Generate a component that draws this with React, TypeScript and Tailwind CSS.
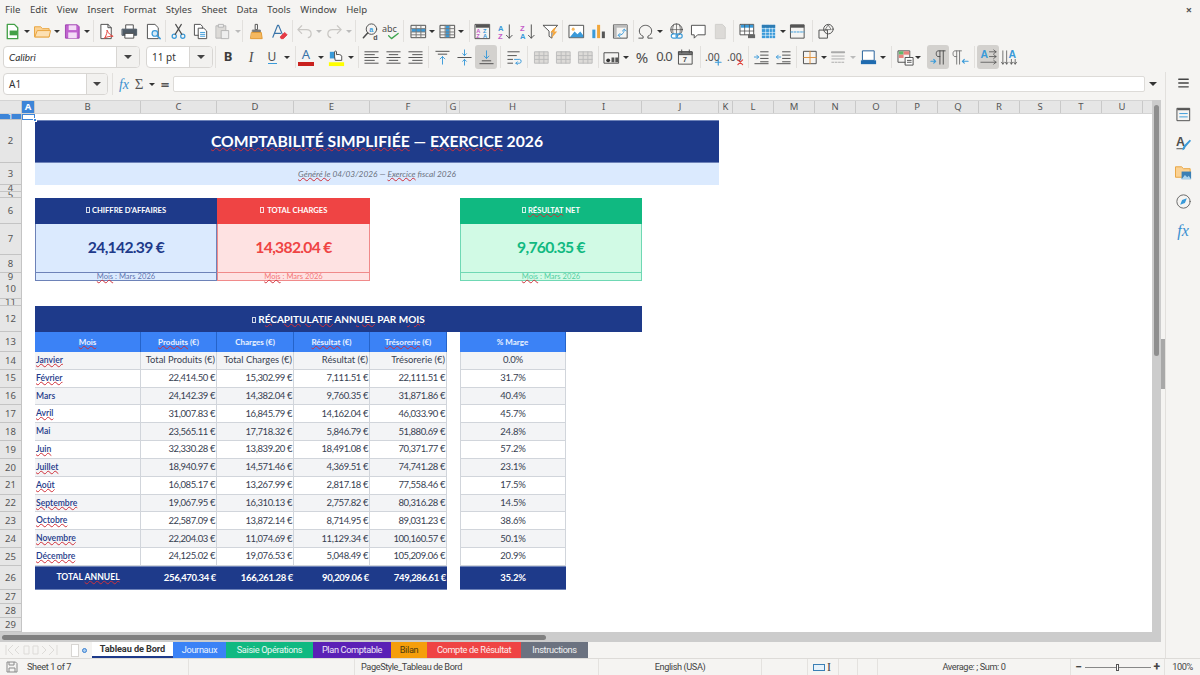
import React from 'react';

const DK = '#4d4d4d';
const BL = '#3a9ad9';
const GY = '#b5b5b5';

const COLS = 'grid grid-cols-[22px_13px_106px_76px_77px_76px_77px_13px_106px_76px_77px_14px_repeat(10,41px)_8px]';
const BODY = "font-['Lato',sans-serif]";
const UI = "font-['Noto_Sans',sans-serif]";
const UI2 = "font-['Roboto',sans-serif]";

const Svg = ({ children }: { children: React.ReactNode }) => (
  <svg viewBox="0 0 20 20" className="w-[19px] h-[19px] shrink-0" fill="none" strokeWidth="1" strokeLinecap="round" strokeLinejoin="round">
    {children}
  </svg>
);

const Btn = ({ w, on, children }: { w: string; on?: boolean; children?: React.ReactNode }) => (
  <div className={`${w} h-[24px] shrink-0 flex items-center justify-center ${on ? 'bg-[#d3d1ce] rounded-[3px]' : ''}`}>{children}</div>
);

const Arrow = ({ w, off }: { w: string; off?: boolean }) => (
  <div className={`${w} h-[24px] shrink-0 flex items-center justify-center`}>
    <div className={`w-0 h-0 border-x-[3px] border-x-transparent border-t-[3px] ${off ? 'border-t-[#bbbbbb]' : 'border-t-[#333333]'}`}></div>
  </div>
);

const Sep = ({ w }: { w: string }) => (
  <div className={`${w} h-[22px] shrink-0 flex justify-center`}>
    <div className="w-px h-full bg-[#e2e0dd]"></div>
  </div>
);

const Lines = ({ pts, c = DK }: { pts: number[][]; c?: string }) => (
  <>
    {pts.map((p, i) => (
      <path key={i} d={`M${p[0]} ${p[1]}H${p[2]}`} stroke={c} />
    ))}
  </>
);

const GridIco = ({ row, col }: { row?: boolean; col?: boolean }) => (
  <Svg>
    <rect x="2.5" y="3.5" width="15" height="13" stroke={DK} />
    {row && <rect x="3" y="7" width="14" height="3.5" fill={BL} />}
    {col && <rect x="8" y="4" width="4" height="12" fill={BL} />}
    <path d="M2.5 7H17.5M2.5 10.5H17.5M2.5 13.5H17.5M7.5 3.5V16.5M12.5 3.5V16.5" stroke="#777" />
  </Svg>
);

const MergeIco = () => (
  <Svg>
    <rect x="3" y="4" width="14" height="12" fill="#dddbd8" stroke="#bbb" />
    <path d="M3 8H17M3 12H17M7.5 4V16M12.5 4V16" stroke="#bbb" />
  </Svg>
);

const AlignIco = ({ pts }: { pts: number[][] }) => (
  <Svg>
    <Lines pts={pts} />
  </Svg>
);

const Letter = ({ x, y, c, s = 7, t }: { x: number; y: number; c: string; s?: number; t: string }) => (
  <text x={x} y={y} fontSize={s} fill={c} fontFamily="Liberation Sans" fontWeight="700">
    {t}
  </text>
);

const Toolbar1 = () => (
  <div className="h-[22px] flex pl-px items-center">
    <Btn w="w-[22px]">
      <Svg>
        <path d="M4.5 2.5H12L15.5 6V17.5H4.5Z" fill="#fff" stroke="#43a047" strokeWidth="1.4" />
        <rect x="7" y="9" width="8" height="5" fill="#43a047" />
      </Svg>
    </Btn>
    <Arrow w="w-[8px]" />
    <Btn w="w-[22px]">
      <Svg>
        <path d="M2 5H8L10 7H17V15.5H2Z" fill="#fbd294" stroke="#e8a33d" />
        <path d="M2 15.5L4.5 9H18.5L17 15.5Z" fill="#fce0b3" stroke="#e8a33d" />
      </Svg>
    </Btn>
    <Arrow w="w-[8px]" />
    <Btn w="w-[22px]">
      <Svg>
        <path d="M3 3H15L17 5V17H3Z" fill="#c062cf" stroke="#9c3fae" />
        <rect x="6" y="3.5" width="8" height="5" fill="#f4dcf7" />
        <rect x="5.5" y="11" width="9" height="6" fill="#f4dcf7" />
      </Svg>
    </Btn>
    <Arrow w="w-[7px]" />
    <Sep w="w-[6px]" />
    <Btn w="w-[21px]">
      <Svg>
        <path d="M4.5 2.5H11.5L15 6V17.5H4.5Z" stroke={DK} fill="#fff" />
        <path d="M11.5 2.5V6H15" stroke={DK} />
        <path d="M8 17C10 14 11 10 10.5 8.5C12 12 14 14 17 15C13 15 10 15.5 8 17Z" stroke="#e0403a" />
      </Svg>
    </Btn>
    <Btn w="w-[24px]">
      <Svg>
        <path d="M6 7V3H14V7" stroke={DK} fill="#fff" />
        <path d="M2.5 7.5H17.5V14H2.5Z" fill="#4f5b66" stroke="#4f5b66" />
        <rect x="5.5" y="12" width="9" height="5" fill="#fff" stroke={DK} />
      </Svg>
    </Btn>
    <Btn w="w-[24px]">
      <Svg>
        <path d="M4 2.5H11.5L15 6V17.5H4Z" stroke={DK} fill="#fff" />
        <circle cx="11.5" cy="12" r="3" stroke={BL} fill="#d7ebf8" strokeWidth="1.3" />
        <path d="M14 14.5L17 17.5" stroke={BL} strokeWidth="1.6" />
      </Svg>
    </Btn>
    <Sep w="w-px" />
    <Btn w="w-[24px]">
      <Svg>
        <circle cx="5.5" cy="15" r="2.2" stroke={BL} strokeWidth="1.3" />
        <circle cx="14.5" cy="15" r="2.2" stroke={BL} strokeWidth="1.3" />
        <path d="M6.5 13L13 2.5M13.5 13L7 2.5" stroke={DK} strokeWidth="1.2" />
      </Svg>
    </Btn>
    <Btn w="w-[20px]">
      <Svg>
        <path d="M4 2.5H10L12 4.5V14H4Z" stroke={DK} fill="#fff" />
        <path d="M8 6.5H13.5L16.5 9.5V17.5H8Z" stroke={DK} fill="#fff" />
        <path d="M10 11H14.5M10 13H14.5M10 15H14.5" stroke={BL} />
      </Svg>
    </Btn>
    <Btn w="w-[24px]">
      <Svg>
        <rect x="3.5" y="4" width="10" height="13" fill="#dcdad7" stroke={GY} />
        <rect x="6" y="2.5" width="5" height="3" fill="#eee" stroke={GY} />
        <rect x="9" y="9" width="7.5" height="8.5" fill="#eee" stroke={GY} />
      </Svg>
    </Btn>
    <Arrow w="w-[8px]" off />
    <Sep w="w-px" />
    <Btn w="w-[26px]">
      <Svg>
        <path d="M9 2.5H11V8H9Z" stroke={DK} fill="#fff" />
        <path d="M6 8.5H14V11H6Z" fill="#777" stroke="#777" />
        <path d="M5 11H15L16 17.5H4Z" fill="#f5b85f" stroke="#e09a33" />
      </Svg>
    </Btn>
    <Btn w="w-[20px]">
      <Svg>
        <path d="M3 16L8 3.5H9L13 13M5 12H11" stroke="#3973a8" strokeWidth="1.2" />
        <path d="M11 15.5L15.5 11L18 13.5L14 17.5H12Z" fill="#e53b46" stroke="#e53b46" />
      </Svg>
    </Btn>
    <Sep w="w-[6px]" />
    <Btn w="w-[18px]">
      <Svg>
        <path d="M3 8L7 4M3 8L7 12M3 8H12C15 8 17 10 17 12.5C17 14.5 15.5 16 14 16.5" stroke="#c9c7c4" strokeWidth="1.3" />
      </Svg>
    </Btn>
    <Arrow w="w-[12px]" off />
    <Btn w="w-[18px]">
      <Svg>
        <path d="M17 8L13 4M17 8L13 12M17 8H8C5 8 3 10 3 12.5C3 14.5 4.5 16 6 16.5" stroke="#c9c7c4" strokeWidth="1.3" />
      </Svg>
    </Btn>
    <Arrow w="w-[12px]" off />
    <Sep w="w-px" />
    <Btn w="w-[28px]">
      <Svg>
        <circle cx="11" cy="7.5" r="5.5" stroke={DK} />
        <path d="M7 11.5L2.5 16.5" stroke={DK} strokeWidth="1.6" />
        <Letter x={8.6} y={10} c={BL} s={7.5} t="a" />
        <Letter x={13} y={18.5} c={DK} s={7.5} t="d" />
      </Svg>
    </Btn>
    <Btn w="w-[14px]">
      <Svg>
        <text x="0" y="10" fontSize="9.5" fill={DK} fontFamily="Noto Sans">abc</text>
        <path d="M7 14.5L10 17.5L17 12" stroke="#3fa650" strokeWidth="1.4" />
      </Svg>
    </Btn>
    <Sep w="w-[10px]" />
    <Btn w="w-[20px]">
      <GridIco row />
    </Btn>
    <Arrow w="w-[8px]" />
    <Btn w="w-[22px]">
      <GridIco col />
    </Btn>
    <Arrow w="w-[6px]" />
    <Sep w="w-[10px]" />
    <Btn w="w-[16px]">
      <Svg>
        <rect x="2.5" y="2.5" width="15" height="15" stroke={DK} />
        <rect x="3" y="3" width="14" height="3" fill="#555" />
        <Letter x={3.5} y={12} c="#c45cc9" s={6} t="A" />
        <Letter x={3.5} y={17} c="#c45cc9" s={6} t="Z" />
        <Letter x={10.5} y={12} c={BL} s={6} t="Z" />
        <Letter x={10.5} y={17} c={BL} s={6} t="A" />
      </Svg>
    </Btn>
    <div className="w-[4px] shrink-0"></div>
    <Btn w="w-[22px]">
      <Svg>
        <Letter x={2} y={9} c={BL} s={8} t="A" />
        <Letter x={2} y={18} c="#c45cc9" s={8} t="Z" />
        <path d="M14 3V17M11 14L14 17L17 14" stroke={DK} />
      </Svg>
    </Btn>
    <Btn w="w-[22px]">
      <Svg>
        <Letter x={2} y={9} c="#c45cc9" s={8} t="Z" />
        <Letter x={2} y={18} c={BL} s={8} t="A" />
        <path d="M14 3V17M11 14L14 17L17 14" stroke={DK} />
      </Svg>
    </Btn>
    <Btn w="w-[24px]">
      <Svg>
        <path d="M2.5 3.5H17.5L11.5 10V17L8.5 15V10Z" stroke={DK} fill="#fff" />
        <path d="M13 7L16 5L14 10H17L11 17L13 11H10Z" fill="#f5a63c" />
      </Svg>
    </Btn>
    <Sep w="w-px" />
    <Btn w="w-[26px]">
      <Svg>
        <rect x="2.5" y="3.5" width="15" height="13" stroke={DK} fill="#fff" />
        <circle cx="6.5" cy="7.5" r="1.6" fill="#f5b85f" />
        <path d="M3 16L8 10L11 13L14 10L17 14V16Z" fill={BL} />
      </Svg>
    </Btn>
    <Btn w="w-[18px]">
      <Svg>
        <rect x="3.5" y="8" width="3.2" height="9" fill={BL} />
        <rect x="8.5" y="3" width="3.2" height="14" fill="#f0a63c" />
        <rect x="13.5" y="10" width="3.2" height="7" fill="#555" />
      </Svg>
    </Btn>
    <Btn w="w-[26px]">
      <Svg>
        <rect x="3" y="3" width="14" height="14" stroke={DK} />
        <rect x="3" y="3" width="14" height="3" fill="#bbb" />
        <rect x="3" y="3" width="3" height="14" fill="#bbb" />
        <path d="M8 14C12 14 14 11 14 8M12 9.5L14 7.5L16 9.5M9.5 12L7.5 14L9.5 16" stroke={BL} />
      </Svg>
    </Btn>
    <Sep w="w-px" />
    <Btn w="w-[22px]">
      <Svg>
        <path d="M3 17H7.5V15C5 14 3.5 12 3.5 9.5C3.5 6 6.5 3.5 10 3.5C13.5 3.5 16.5 6 16.5 9.5C16.5 12 15 14 12.5 15V17H17" stroke={DK} />
      </Svg>
    </Btn>
    <Arrow w="w-[8px]" />
    <Btn w="w-[24px]">
      <Svg>
        <circle cx="10" cy="8" r="6" stroke={DK} />
        <path d="M4 8H16M10 2V14M7 3C5.5 6 5.5 10 7 13M13 3C14.5 6 14.5 10 13 13" stroke={DK} strokeWidth="0.7" />
        <rect x="4.5" y="12.5" width="6.5" height="4.5" rx="2.2" fill="#fff" stroke={BL} strokeWidth="1.2" />
        <rect x="9.5" y="12.5" width="6.5" height="4.5" rx="2.2" fill="none" stroke={BL} strokeWidth="1.2" />
      </Svg>
    </Btn>
    <Btn w="w-[20px]">
      <Svg>
        <path d="M3 3.5H17V13.5H9L5.5 17V13.5H3Z" stroke={DK} fill="#fff" />
      </Svg>
    </Btn>
    <Btn w="w-[24px]">
      <Svg>
        <path d="M5 2.5H12L15 5.5V17.5H5Z" fill="#dcdad7" stroke="#cfcdca" />
      </Svg>
    </Btn>
    <Sep w="w-[2px]" />
    <Btn w="w-[26px]">
      <Svg>
        <rect x="2.5" y="2.5" width="14" height="11" stroke={DK} fill="#fff" />
        <rect x="3" y="3" width="13" height="3" fill={BL} />
        <path d="M2.5 9.5H16.5M7 3V13M12 3V13" stroke={DK} strokeWidth="0.8" />
        <path d="M10.5 13H18V17H10.5Z" fill="#666" />
      </Svg>
    </Btn>
    <Btn w="w-[16px]">
      <Svg>
        <rect x="3" y="3" width="14" height="14" fill={BL} />
        <path d="M3 7H17M3 11H17M3 14H17M7 3V17M11 3V17M14 3V17" stroke="#fff" strokeWidth="0.6" />
        <rect x="3" y="3" width="14" height="3" fill="#2e7cb3" />
      </Svg>
    </Btn>
    <Arrow w="w-[14px]" />
    <Btn w="w-[14px]">
      <Svg>
        <rect x="3" y="3" width="14" height="14" stroke={DK} />
        <rect x="3" y="3" width="14" height="3" fill="#555" />
        <path d="M3 10.5H17" stroke={BL} strokeDasharray="2 1.4" />
      </Svg>
    </Btn>
    <Sep w="w-[16px]" />
    <Btn w="w-[12px]">
      <Svg>
        <rect x="2.5" y="8.5" width="8.5" height="8.5" stroke={DK} />
        <circle cx="12" cy="7.5" r="5" stroke={DK} />
        <path d="M12 3.5L15 8H9Z" stroke={DK} strokeWidth="0.7" />
      </Svg>
    </Btn>
  </div>
);

const Combo = ({ w, boxW, text, italic }: { w: string; boxW: string; text: string; italic?: boolean }) => (
  <div className={`${w} h-[22px] shrink-0 flex border border-[#d8d6d3] rounded-[4px] bg-white overflow-hidden`}>
    <div className={`flex-1 flex items-center pl-[5px] text-[10px] text-[#333333] ${italic ? `${BODY} italic` : UI}`}>{text}</div>
    <div className={`${boxW} bg-[#f2f1ef] border-l border-[#d8d6d3] flex items-center justify-center`}>
      <div className="w-0 h-0 border-x-[4px] border-x-transparent border-t-[4px] border-t-[#444444]"></div>
    </div>
  </div>
);

const ALeft = [[3, 4, 17], [3, 7, 13], [3, 10, 17], [3, 13, 13], [3, 16, 17]];
const ACenter = [[3, 4, 17], [5.5, 7, 14.5], [3, 10, 17], [5.5, 13, 14.5], [3, 16, 17]];
const ARight = [[3, 4, 17], [7, 7, 17], [3, 10, 17], [7, 13, 17], [3, 16, 17]];

const Toolbar2 = () => (
  <div className="h-[30px] flex pl-[3px] items-center">
    <Combo w="w-[137px]" boxW="w-[23px]" text="Calibri" italic />
    <div className="w-[6px] shrink-0"></div>
    <Combo w="w-[67px]" boxW="w-[23px]" text="11 pt" />
    <Sep w="w-[4px]" />
    <Btn w="w-[22px]"><span className={`${UI} font-bold text-[13px] text-[#3c3c3c]`}>B</span></Btn>
    <Btn w="w-[24px]"><span className="font-['Liberation_Serif',serif] italic text-[14px] text-[#4d4d4d]">I</span></Btn>
    <Btn w="w-[18px]">
      <div className="flex flex-col items-center">
        <span className={`${UI} text-[12px] leading-[13px] text-[#4d4d4d]`}>U</span>
        <div className="w-[9px] h-px bg-[#3a9ad9]"></div>
      </div>
    </Btn>
    <Arrow w="w-[12px]" />
    <Sep w="w-[4px]" />
    <Btn w="w-[18px]">
      <div className="flex flex-col items-center">
        <span className={`${UI} text-[13px] leading-[13px] text-[#3973a8]`}>A</span>
        <div className="w-[16px] h-[4px] mt-px bg-[#c9211e]"></div>
      </div>
    </Btn>
    <Arrow w="w-[12px]" />
    <Btn w="w-[18px]">
      <Svg>
        <rect x="3" y="4" width="7" height="7" fill={BL} />
        <path d="M8 9V4C8 3 10 3 10 4V7C12 6.5 15 7 15.5 8.5V13H9Z" fill="#fff" stroke={DK} />
        <rect x="2" y="15" width="16" height="4" fill="#ffff00" />
      </Svg>
    </Btn>
    <Arrow w="w-[12px]" />
    <Sep w="w-[2px]" />
    <Btn w="w-[24px]"><AlignIco pts={ALeft} /></Btn>
    <Btn w="w-[21px]"><AlignIco pts={ACenter} /></Btn>
    <Btn w="w-[22px]"><AlignIco pts={ARight} /></Btn>
    <Sep w="w-[5px]" />
    <Btn w="w-[22px]">
      <Svg>
        <path d="M3 3.5H17M5.5 6.5H14.5" stroke={DK} />
        <path d="M10 17V9M7.5 11.5L10 9L12.5 11.5" stroke={BL} />
      </Svg>
    </Btn>
    <Btn w="w-[22px]">
      <Svg>
        <path d="M3 10H17" stroke={DK} />
        <path d="M10 2V8M8 6L10 8L12 6M10 18V12M8 14L10 12L12 14" stroke={BL} />
      </Svg>
    </Btn>
    <Btn w="w-[22px]" on>
      <Svg>
        <path d="M5.5 13.5H14.5M3 16.5H17" stroke={DK} />
        <path d="M10 3V11M7.5 8.5L10 11L12.5 8.5" stroke={BL} />
      </Svg>
    </Btn>
    <Sep w="w-[6px]" />
    <Btn w="w-[22px]">
      <Svg>
        <path d="M3 4H15M3 8H12M3 12H8M3 16H8" stroke={DK} />
        <path d="M10 12H15.5C17.5 12 17.5 16 15.5 16H11.5M13 14.5L11.5 16L13 17.5" stroke={BL} />
      </Svg>
    </Btn>
    <Sep w="w-[5px]" />
    <Btn w="w-[22px]"><MergeIco /></Btn>
    <Btn w="w-[22px]"><MergeIco /></Btn>
    <Btn w="w-[22px]"><MergeIco /></Btn>
    <Sep w="w-[4px]" />
    <Btn w="w-[22px]">
      <Svg>
        <rect x="2.5" y="5" width="15" height="11" stroke={DK} />
        <circle cx="6.5" cy="13" r="2" fill="#333" />
        <rect x="10" y="10" width="3" height="5" fill="#555" />
        <rect x="14" y="10" width="3" height="5" fill="#555" />
      </Svg>
    </Btn>
    <Arrow w="w-[8px]" />
    <Btn w="w-[24px]"><span className={`${UI} text-[15px] text-[#4d4d4d]`}>%</span></Btn>
    <Btn w="w-[20px]"><span className={`${UI} text-[13px] tracking-[-1px] text-[#4d4d4d]`}>0.0</span></Btn>
    <Btn w="w-[22px]">
      <Svg>
        <rect x="3" y="4" width="14" height="13" stroke={DK} />
        <path d="M3 4H17V7H3ZM6 2V5M14 2V5" stroke={DK} fill="#777" />
        <Letter x={7} y={15} c={DK} s={8} t="7" />
      </Svg>
    </Btn>
    <Sep w="w-[8px]" />
    <Btn w="w-[18px]">
      <Svg>
        <text x="1" y="14" fontSize="11" fill={DK} fontFamily="Noto Sans">.00</text>
        <path d="M15 12V18M12 15H18" stroke={BL} strokeWidth="1.2" />
      </Svg>
    </Btn>
    <Btn w="w-[26px]">
      <Svg>
        <text x="1" y="14" fontSize="11" fill={DK} fontFamily="Noto Sans">.00</text>
        <path d="M12.5 12.5L17.5 17.5M17.5 12.5L12.5 17.5" stroke="#e0403a" strokeWidth="1.2" />
      </Svg>
    </Btn>
    <Sep w="w-px" />
    <Btn w="w-[24px]">
      <Svg>
        <path d="M9 4H17M9 7.5H17M9 11H17M9 14.5H17M3 16.5H17" stroke={DK} />
        <path d="M2.5 9.5H7M5 7.5L7 9.5L5 11.5" stroke={BL} />
      </Svg>
    </Btn>
    <Btn w="w-[20px]">
      <Svg>
        <path d="M9 4H17M9 7.5H17M9 11H17M9 14.5H17M3 16.5H17" stroke={DK} />
        <path d="M7 9.5H2.5M4.5 7.5L2.5 9.5L4.5 11.5" stroke={BL} />
      </Svg>
    </Btn>
    <Sep w="w-[6px]" />
    <Btn w="w-[22px]">
      <Svg>
        <rect x="3" y="3.5" width="13" height="13" stroke={DK} />
        <path d="M9.5 3.5V16.5M3 10H16" stroke="#e0903a" />
      </Svg>
    </Btn>
    <Arrow w="w-[6px]" />
    <Btn w="w-[22px]">
      <Svg>
        <path d="M3 4.5H16" stroke="#aaa" strokeWidth="2" />
        <path d="M3 8.5H16M3 11.5H16" stroke="#aaa" />
        <path d="M3 15H16" stroke="#aaa" strokeDasharray="2 1.5" />
      </Svg>
    </Btn>
    <Arrow w="w-[8px]" off />
    <Btn w="w-[22px]">
      <Svg>
        <rect x="4" y="3" width="12" height="10" stroke="#1f5d99" fill="#fff" />
        <rect x="2" y="13" width="16" height="4" fill="#1f6bb0" />
      </Svg>
    </Btn>
    <Arrow w="w-[8px]" />
    <Sep w="w-[8px]" />
    <Btn w="w-[20px]">
      <Svg>
        <rect x="2.5" y="3" width="12" height="12" stroke={DK} />
        <rect x="3" y="3.5" width="5" height="3.5" fill="#5fb96b" />
        <rect x="8" y="3.5" width="6" height="3.5" fill="#e8837f" />
        <rect x="3" y="7" width="5" height="3.5" fill="#e8837f" />
        <rect x="10" y="10" width="8" height="8" fill="#fff" stroke={DK} />
        <path d="M12 13H16M12 15H16" stroke={DK} />
      </Svg>
    </Btn>
    <Arrow w="w-[6px]" />
    <div className="w-[6px] shrink-0"></div>
    <Btn w="w-[22px]" on>
      <Svg>
        <path d="M15 3V17M11.5 3V17M17 3H9.5C7 3 7 9 9.5 9H11.5" stroke={DK} />
        <path d="M2 14H7M5 12L7 14L5 16" stroke={BL} strokeWidth="1.2" />
      </Svg>
    </Btn>
    <Btn w="w-[22px]">
      <Svg>
        <path d="M9 3V17M6 3V17M11 3H4C1.5 3 1.5 9 4 9H6" stroke="#777" />
        <path d="M18 14H12M14 12L12 14L14 16" stroke={BL} strokeWidth="1.2" />
      </Svg>
    </Btn>
    <Sep w="w-[6px]" />
    <Btn w="w-[22px]" on>
      <Svg>
        <Letter x={1.5} y={11} c={BL} s={11} t="A" />
        <path d="M11 4H18M15.5 2L18 4L15.5 6M11 9H18M15.5 7L18 9L15.5 11M2 15H18M15.5 13L18 15L15.5 17" stroke={DK} strokeWidth="0.8" />
      </Svg>
    </Btn>
    <Btn w="w-[20px]">
      <Svg>
        <Letter x={9} y={11} c={BL} s={11} t="A" />
        <path d="M3 3V17M1.5 15L3 17L4.5 15M7 3V17M5.5 15L7 17L8.5 15M12 12V17M10.5 15L12 17L13.5 15M16 12V17M14.5 15L16 17L17.5 15" stroke={DK} strokeWidth="0.8" />
      </Svg>
    </Btn>
  </div>
);

const FormulaBar = () => (
  <div className="h-[28px] flex items-start pl-[3px] pt-[1px]">
    <Combo w="w-[105px]" boxW="w-[21px]" text="A1" />
    <div className="w-[4px] shrink-0"></div>
    <Sep w="w-px" />
    <div className="w-[3px] shrink-0"></div>
    <div className="w-[16px] h-[22px] flex items-center justify-center font-['Liberation_Serif',serif] italic text-[14px] text-[#3a8fd0]">fx</div>
    <div className="w-[14px] h-[22px] flex items-center justify-center font-['Liberation_Serif',serif] text-[15px] text-[#555555]">Σ</div>
    <div className="w-[12px] h-[22px] flex items-center justify-center">
      <div className="w-0 h-0 border-x-[3px] border-x-transparent border-t-[3px] border-t-[#333333]"></div>
    </div>
    <div className="w-[14px] h-[22px] flex items-center justify-center text-[15px] font-bold text-[#555555]">=</div>
    <div className="w-px"></div>
    <div className="w-[972px] h-[16px] mt-[3px] bg-white border border-[#dddbd8] rounded-[2px]"></div>
    <div className="flex-1 h-[22px] flex items-center justify-center">
      <div className="w-0 h-0 border-x-[4px] border-x-transparent border-t-[4px] border-t-[#333333]"></div>
    </div>
  </div>
);

const ColHead = ({ t, on }: { t: string; on?: boolean }) => (
  <div className={`flex items-center justify-center border-r border-[#c9c9c9] ${on ? 'bg-[#3d85d8] text-white font-bold' : 'text-[#555555]'}`}>{t}</div>
);

const ColHeaders = () => (
  <div className={`${COLS} h-[14px] bg-[#e6e6e6] border-y border-[#d4d4d4] text-[9.5px] leading-none ${UI}`}>
    <div className="border-r border-[#c9c9c9]"></div>
    <ColHead t="A" on />
    {'BCDEFGHIJKLMNOPQRSTU'.split('').map(c => (
      <ColHead key={c} t={c} />
    ))}
    <div></div>
  </div>
);

const RowHead = ({ n, on, className = '' }: { n: number; on?: boolean; className?: string }) => (
  <div className={`col-start-1 flex items-center justify-center overflow-hidden border-b border-r border-[#c4c4c4] text-[9.5px] leading-none ${UI} ${on ? 'bg-[#3d85d8] text-white' : 'bg-[#e6e6e6] text-[#555555]'} ${className}`}>
    {n}
  </div>
);

const Wavy = ({ children }: { children: React.ReactNode }) => (
  <span className="underline decoration-wavy decoration-[#d0303a] decoration-[length:0.7px] underline-offset-0">{children}</span>
);

const Tofu = () => <span className="inline-block w-[4px] h-[6px] mr-[2px] border-[0.5px] border-white/80"></span>;

type Row = { m: string; bad: boolean; v: string[]; marge: string };
const mk = (m: string, bad: boolean, a: string, b: string, c: string, d: string, marge: string): Row => ({
  m, bad, v: [a, b, c, d].map(x => `${x} €`), marge,
});
const DATA: Row[] = [
  { m: 'Janvier', bad: true, v: ['Total Produits (€)', 'Total Charges (€)', 'Résultat (€)', 'Trésorerie (€)'], marge: '0.0%' },
  mk('Février', true, '22,414.50', '15,302.99', '7,111.51', '22,111.51', '31.7%'),
  mk('Mars', false, '24,142.39', '14,382.04', '9,760.35', '31,871.86', '40.4%'),
  mk('Avril', true, '31,007.83', '16,845.79', '14,162.04', '46,033.90', '45.7%'),
  mk('Mai', false, '23,565.11', '17,718.32', '5,846.79', '51,880.69', '24.8%'),
  mk('Juin', true, '32,330.28', '13,839.20', '18,491.08', '70,371.77', '57.2%'),
  mk('Juillet', true, '18,940.97', '14,571.46', '4,369.51', '74,741.28', '23.1%'),
  mk('Août', true, '16,085.17', '13,267.99', '2,817.18', '77,558.46', '17.5%'),
  mk('Septembre', true, '19,067.95', '16,310.13', '2,757.82', '80,316.28', '14.5%'),
  mk('Octobre', true, '22,587.09', '13,872.14', '8,714.95', '89,031.23', '38.6%'),
  mk('Novembre', true, '22,204.03', '11,074.69', '11,129.34', '100,160.57', '50.1%'),
  mk('Décembre', true, '24,125.02', '19,076.53', '5,048.49', '105,209.06', '20.9%'),
];

const HeadCell = ({ className = '', children }: { className?: string; children: React.ReactNode }) => (
  <div className={`bg-[#3b82f6] text-white/90 font-bold text-[8px] flex items-center justify-center border-r border-[#2563c9] ${className}`}>{children}</div>
);

const Sheet = () => (
  <div className={`w-[1152px] h-[518px] overflow-hidden bg-white relative ${BODY}`}>
    {/* A1 cursor */}
    <div className="absolute left-[22px] top-0 w-[13px] h-[6px] border border-[#3d85d8]"></div>
    <div className="absolute left-[33px] top-[4px] w-[4px] h-[4px] bg-[#3d85d8] border border-white"></div>

    <div className={`${COLS} h-[6px]`}>
      <RowHead n={1} on />
    </div>
    <div className={`${COLS} h-[43px]`}>
      <RowHead n={2} />
      <div className="col-start-3 col-span-9 bg-[#1e3a8a] text-white font-bold text-[15.7px] flex items-center justify-center border-y border-[#6d82b8]">
        <span><Wavy>COMPTABILITÉ SIMPLIFIÉE</Wavy> — <Wavy>EXERCICE</Wavy> 2026</span>
      </div>
    </div>
    <div className={`${COLS} h-[22px]`}>
      <RowHead n={3} />
      <div className="col-start-3 col-span-9 bg-[#dbeafe] text-[#6b7280] italic text-[8.3px] flex items-center justify-center">
        <span><Wavy>Généré le</Wavy> 04/03/2026 — <Wavy>Exercice</Wavy> fiscal 2026</span>
      </div>
    </div>
    <div className={`${COLS} h-[7px]`}>
      <RowHead n={4} />
    </div>
    <div className={`${COLS} h-[6px]`}>
      <RowHead n={5} />
    </div>
    <div className={`${COLS} h-[26px]`}>
      <RowHead n={6} />
      <div className="col-start-3 col-span-2 bg-[#1e3a8a] text-white font-bold text-[7.6px] flex items-center justify-center">
        <span><Tofu />CHIFFRE D'AFFAIRES</span>
      </div>
      <div className="col-start-5 col-span-2 bg-[#ef4444] text-white font-bold text-[7.6px] flex items-center justify-center">
        <span><Tofu /> TOTAL CHARGES</span>
      </div>
      <div className="col-start-9 col-span-2 bg-[#10b981] text-white font-bold text-[7.6px] flex items-center justify-center">
        <span><Tofu /><Wavy>RÉSULTAT</Wavy> NET</span>
      </div>
    </div>
    <div className={`${COLS} grid-rows-[31px_18px] h-[49px]`}>
      <RowHead n={7} className="row-start-1" />
      <RowHead n={8} className="row-start-2" />
      <div className="col-start-3 col-span-2 row-start-1 row-span-2 bg-[#dbeafe] text-[#1e3a8a] font-bold text-[15.7px] tracking-[-0.7px] flex items-center justify-center border-x border-b border-[#6d82b8]">
        24,142.39 €
      </div>
      <div className="col-start-5 col-span-2 row-start-1 row-span-2 bg-[#fee2e2] text-[#ef4444] font-bold text-[15.7px] tracking-[-0.7px] flex items-center justify-center border-x border-b border-[#f08a8a]">
        14,382.04 €
      </div>
      <div className="col-start-9 col-span-2 row-start-1 row-span-2 bg-[#d1fae5] text-[#10b981] font-bold text-[15.7px] tracking-[-0.7px] flex items-center justify-center border-x border-b border-[#6fd8b4]">
        9,760.35 €
      </div>
    </div>
    <div className={`${COLS} h-[7px]`}>
      <RowHead n={9} />
      <div className="col-start-3 col-span-2 bg-[#dbeafe] text-[#1e3a8a]/70 text-[7.6px] leading-[7px] text-center border-x border-b border-[#6d82b8]">
        <Wavy>Mois</Wavy> : Mars 2026
      </div>
      <div className="col-start-5 col-span-2 bg-[#fee2e2] text-[#ef4444]/70 text-[7.6px] leading-[7px] text-center border-x border-b border-[#f08a8a]">
        <Wavy>Mois</Wavy> : Mars 2026
      </div>
      <div className="col-start-9 col-span-2 bg-[#d1fae5] text-[#10b981]/70 text-[7.6px] leading-[7px] text-center border-x border-b border-[#6fd8b4]">
        <Wavy>Mois</Wavy> : Mars 2026
      </div>
    </div>
    <div className={`${COLS} h-[19px]`}>
      <RowHead n={10} />
    </div>
    <div className={`${COLS} h-[7px]`}>
      <RowHead n={11} />
    </div>
    <div className={`${COLS} h-[26px]`}>
      <RowHead n={12} />
      <div className="col-start-3 col-span-8 bg-[#1e3a8a] text-white font-bold text-[10px] flex items-center justify-center">
        <span><Tofu /><Wavy>RÉCAPITULATIF ANNUEL</Wavy> PAR <Wavy>MOIS</Wavy></span>
      </div>
    </div>
    <div className={`${COLS} h-[20px]`}>
      <RowHead n={13} />
      <HeadCell className="col-start-3"><Wavy>Mois</Wavy></HeadCell>
      <HeadCell className="col-start-4"><span><Wavy>Produits</Wavy> (€)</span></HeadCell>
      <HeadCell className="col-start-5"><span>Charges (€)</span></HeadCell>
      <HeadCell className="col-start-6"><span><Wavy>Résultat</Wavy> (€)</span></HeadCell>
      <HeadCell className="col-start-7"><span><Wavy>Trésorerie</Wavy> (€)</span></HeadCell>
      <HeadCell className="col-start-9">% Marge</HeadCell>
    </div>
    {DATA.map((r, i) => (
      <div key={r.m} className={`${COLS} h-[17.83px]`}>
        <RowHead n={14 + i} />
        <div className={`col-start-3 text-[8.6px] font-semibold text-[#1e3a8a] flex items-center pl-px border-r border-b border-[#d1d5db] ${i % 2 === 0 ? 'bg-[#f3f4f6]' : 'bg-white'}`}>
          {r.bad ? <Wavy>{r.m}</Wavy> : r.m}
        </div>
        {r.v.map(x => (
          <div key={x} className={`text-[#374151] flex items-center justify-end pr-px whitespace-nowrap border-r border-b border-[#d1d5db] ${i === 0 ? 'text-[9.4px]' : 'text-[9.5px] tracking-[-0.4px]'} ${i % 2 === 0 ? 'bg-[#f3f4f6]' : 'bg-white'}`}>
            {x}
          </div>
        ))}
        <div className={`col-start-9 text-[9.5px] tracking-[-0.2px] text-[#374151] flex items-center justify-center border-x border-b border-[#d1d5db] ${i % 2 === 0 ? 'bg-[#f3f4f6]' : 'bg-white'}`}>
          {r.marge}
        </div>
      </div>
    ))}
    <div className={`${COLS} h-[24px]`}>
      <RowHead n={26} />
      <div className="col-start-3 bg-[#1e3a8a] text-white font-bold text-[8.6px] flex items-center justify-center border-y border-[#6d82b8]">
        <span>TOTAL <Wavy>ANNUEL</Wavy></span>
      </div>
      {['256,470.34 €', '166,261.28 €', '90,209.06 €', '749,286.61 €'].map(x => (
        <div key={x} className="bg-[#1e3a8a] text-white font-bold text-[9.5px] tracking-[-0.35px] flex items-center justify-end pr-px whitespace-nowrap border-y border-[#6d82b8]">
          {x}
        </div>
      ))}
      <div className="col-start-9 bg-[#1e3a8a] text-white font-bold text-[9.5px] tracking-[-0.2px] flex items-center justify-center border-y border-[#6d82b8]">
        35.2%
      </div>
    </div>
    <div className={`${COLS} h-[14px]`}>
      <RowHead n={27} />
    </div>
    <div className={`${COLS} h-[14px]`}>
      <RowHead n={28} />
    </div>
    <div className={`${COLS} h-[14px]`}>
      <RowHead n={29} />
    </div>
  </div>
);

const TABS = [
  { t: 'Journaux', c: 'w-[53px] bg-[#3b82f6]' },
  { t: 'Saisie Opérations', c: 'w-[87px] bg-[#10b981]' },
  { t: 'Plan Comptable', c: 'w-[78px] bg-[#5b21b6]' },
  { t: 'Bilan', c: 'w-[36px] bg-[#f59e0b] !text-[#4d3a10]' },
  { t: 'Compte de Résultat', c: 'w-[94px] bg-[#ef4444]' },
  { t: 'Instructions', c: 'w-[67px] bg-[#6b7280]' },
];

const TabBar = () => (
  <div className={`h-[16px] flex items-stretch bg-[#f5f4f2] text-[9.2px] tracking-[-0.35px] ${UI2}`}>
    <div className="w-[66px] flex items-center pl-[5px] shrink-0">
      <svg viewBox="0 0 54 12" className="w-[54px] h-[12px]" fill="none" stroke="#dddbd8" strokeWidth="1">
        <path d="M1 1V11M8 1L3 6L8 11M14 2L10 6L14 10M19 2H24M19 10H24M19 2V10M24 2V10M28 2H33V10H28ZM37 2L41 6L37 10M44 1L49 6L44 11M52 1V11" />
      </svg>
    </div>
    <div className="w-[26px] flex items-center justify-center shrink-0 gap-[3px]">
      <div className="w-[8px] h-[13px] bg-white border border-[#d8d6d3]"></div>
      <div className="w-[5px] h-[5px] rounded-full border border-[#3a7fd0] bg-[#a8cdf2]"></div>
    </div>
    <div className="w-[81px] flex items-center justify-center bg-white border-b-2 border-[#1e3a8a] font-bold tracking-[-0.1px] text-[#333333] shrink-0">Tableau de Bord</div>
    {TABS.map(t => (
      <div key={t.t} className={`${t.c} flex items-center justify-center text-white/90 shrink-0`}>{t.t}</div>
    ))}
  </div>
);

const StatusCell = ({ w, className = '', children }: { w: string; className?: string; children?: React.ReactNode }) => (
  <div className={`${w} shrink-0 h-full flex items-center border-r border-[#e4e2df] ${className}`}>{children}</div>
);

const StatusBar = () => (
  <div className={`h-[17px] flex items-center bg-[#f5f4f2] border-t border-[#dddbd8] text-[9.2px] tracking-[-0.4px] text-[#444444] ${UI2}`}>
    <StatusCell w="w-[189px]" className="pl-[6px] gap-[9px]">
      <svg viewBox="0 0 12 12" className="w-[12px] h-[12px]" fill="none" stroke="#8a8a8a" strokeWidth="1">
        <path d="M1 1H9.5L11 2.5V11H1ZM3 1V4H8V1M3 11V7H9V11" />
      </svg>
      Sheet 1 of 7
    </StatusCell>
    <StatusCell w="w-[166px]"></StatusCell>
    <StatusCell w="w-[244px]" className="pl-[6px]">PageStyle_Tableau de Bord</StatusCell>
    <StatusCell w="w-[163px]" className="justify-center">English (USA)</StatusCell>
    <StatusCell w="w-[46px]"></StatusCell>
    <StatusCell w="w-[31px]" className="pl-[5px] gap-[2px]">
      <div className="w-[12px] h-[7px] border border-[#3a7fb5] bg-[#e6f2fb]"></div>
      <span className="font-['Liberation_Serif',serif] text-[12px] leading-none">I</span>
    </StatusCell>
    <StatusCell w="w-[19px]"></StatusCell>
    <StatusCell w="w-[20px]"></StatusCell>
    <StatusCell w="w-[193px]" className="justify-center">Average: ; Sum: 0</StatusCell>
    <div className="w-[94px] shrink-0 h-full flex items-center justify-center gap-[3px] border-r border-[#e4e2df]">
      <span className="text-[12px] leading-none font-bold">−</span>
      <div className="w-[66px] h-px bg-[#888888] flex justify-center items-center">
        <div className="w-[3px] h-[7px] border border-[#555555] bg-white"></div>
      </div>
      <span className="text-[12px] leading-none font-bold">+</span>
    </div>
    <div className="flex-1 text-center">100%</div>
  </div>
);

const SideBar = () => (
  <div className="w-[35px] shrink-0 flex flex-col items-center pt-[2px] gap-[10px] bg-[#f5f4f2] border-l border-[#e2e0dd]">
    <Svg>
      <path d="M5 5.5H15M5 9.5H15M5 13.5H15" stroke="#444" strokeWidth="1.4" />
    </Svg>
    <div className="mt-[2px] flex">
      <Svg>
        <rect x="3.5" y="3.5" width="13" height="13" stroke={DK} />
        <rect x="3.5" y="3.5" width="13" height="2" fill="#555" />
        <path d="M6 9H14M6 12.5H14" stroke={BL} />
      </Svg>
    </div>
    <Svg>
      <Letter x={2} y={13} c={DK} s={13} t="A" />
      <path d="M3 15.5H9" stroke={DK} />
      <path d="M9 17C11 17 12 15 12 14L18 7L16.5 6L10.5 12C9.5 13 9 15 9 17Z" fill={BL} />
    </Svg>
    <Svg>
      <path d="M2 4H8L10 6H17V15H2Z" fill="#fbd294" stroke="#e8a33d" />
      <rect x="8" y="9" width="10" height="8" fill="#3a7fb5" />
      <path d="M8 17L11.5 12.5L14 15L15.5 13.5L18 17Z" fill="#a9d3ef" />
    </Svg>
    <Svg>
      <circle cx="10" cy="10" r="7" stroke="#666" />
      <path d="M13.5 6.5L11.5 11.5L6.5 13.5L8.5 8.5Z" fill={BL} />
    </Svg>
    <div className="w-5 h-5 flex items-center justify-center font-['Liberation_Serif',serif] italic text-[16px] text-[#3a8fd0]">fx</div>
  </div>
);

export default function App() {
  return (
    <div className="w-[1200px] h-[675px] overflow-hidden bg-[#f5f4f2] flex flex-col">
      {/* menu */}
      <div className={`h-[20px] shrink-0 flex items-center pl-[5px] pr-[8px] text-[9.6px] text-[#444444] ${UI}`}>
        <div className="flex gap-[9.6px]">
          {['File', 'Edit', 'View', 'Insert', 'Format', 'Styles', 'Sheet', 'Data', 'Tools', 'Window', 'Help'].map(m => (
            <span key={m}>{m}</span>
          ))}
        </div>
        <span className="ml-auto text-[11px] font-bold text-[#555555]">×</span>
      </div>
      <div className="shrink-0">
        <Toolbar1 />
        <Toolbar2 />
      </div>
      <div className="flex-1 min-h-0 flex">
        <div className="w-[1161px] shrink-0 flex flex-col">
          <FormulaBar />
          <div className="flex">
            <div className="w-[1152px] shrink-0">
              <ColHeaders />
              <Sheet />
            </div>
            <div className="w-[9px] shrink-0 bg-[#cccccc] flex flex-col items-center pt-[5px]">
              <div className="w-[5px] h-[251px] bg-[#8e8e8e] rounded-full"></div>
            </div>
          </div>
          <div className="h-[10px] shrink-0 bg-[#cccccc] flex items-center pl-[2px] pr-[2px]">
            <div className="w-[544px] h-[5px] bg-[#808080] rounded-full"></div>
          </div>
          <TabBar />
        </div>
        <div className="w-[4px] shrink-0 flex flex-col bg-[#f5f4f2]">
          <div className="h-[267px]"></div>
          <div className="h-[50px] bg-[#a8a8a8]"></div>
        </div>
        <SideBar />
      </div>
      <StatusBar />
    </div>
  );
}
